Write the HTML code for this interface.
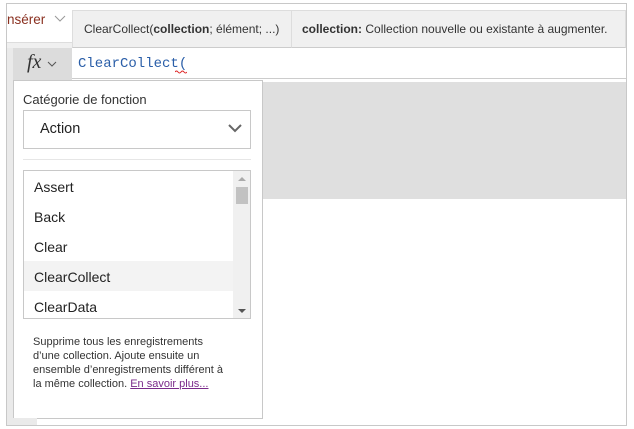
<!DOCTYPE html>
<html><head><meta charset="utf-8"><style>
*{margin:0;padding:0;box-sizing:border-box}
body{width:634px;height:429px;background:#fff;font-family:"Liberation Sans",sans-serif;position:relative;overflow:hidden;color:#333}
.a{position:absolute}
</style></head><body>
<div class="a" style="left:6px;top:3px;width:621px;height:423px;border:1px solid #c8c8c8;background:#fff"></div>
<div class="a" style="left:7px;top:42px;width:65px;height:6px;background:#f0f0f0;border-top:1px solid #ddd"></div>
<div class="a" style="left:7px;top:48px;width:7px;height:377px;background:#eaeaea"></div>
<div class="a" style="left:7px;top:12px;font-size:13.5px;color:#8a3020">nsérer</div>
<svg class="a" style="left:54px;top:15px" width="12" height="8"><path d="M1 1 L6 6 L11 1" fill="none" stroke="#999" stroke-width="1"/></svg>
<div class="a" style="left:72px;top:10px;width:220px;height:38px;background:#f0f0f0;border:1px solid #ddd;border-bottom:1px solid #ccc;font-size:12px;line-height:36px;padding-left:11px;color:#333;white-space:nowrap">ClearCollect(<b>collection</b>; élément; ...)</div>
<div class="a" style="left:291px;top:10px;width:335px;height:38px;background:#f0f0f0;border:1px solid #ddd;border-bottom:1px solid #ccc;font-size:12px;line-height:36px;padding-left:10px;color:#333;white-space:nowrap"><b>collection:</b> Collection nouvelle ou existante à augmenter.</div>
<div class="a" style="left:13px;top:48px;width:59px;height:32px;background:#dcdcdc"></div>
<div class="a" style="left:27px;top:51px;font-family:'Liberation Serif',serif;font-style:italic;font-size:20px;color:#333">fx</div>
<svg class="a" style="left:47px;top:61px" width="10" height="6"><path d="M1 1 L5 5 L9 1" fill="none" stroke="#555" stroke-width="1"/></svg>
<div class="a" style="left:72px;top:78px;width:554px;height:1px;background:#ccc"></div>
<div class="a" style="left:78px;top:56px;font-family:'Liberation Mono',monospace;font-size:14px;color:#2a5ea8">ClearCollect(</div>
<svg class="a" style="left:175px;top:70px" width="12" height="4"><path d="M0 2 Q1.5 0 3 2 T6 2 T9 2 T12 2" fill="none" stroke="#d22" stroke-width="1"/></svg>
<div class="a" style="left:262px;top:82px;width:364px;height:117px;background:#dfdfdf"></div>
<div class="a" style="left:13px;top:80px;width:250px;height:339px;background:#fff;border:1px solid #c8c8c8"></div>
<div class="a" style="left:13px;top:418px;width:24px;height:7px;background:#eaeaea"></div>
<div class="a" style="left:23px;top:92px;font-size:13px;color:#333">Catégorie de fonction</div>
<div class="a" style="left:23px;top:110px;width:228px;height:39px;border:1px solid #c8c8c8;font-size:14.5px;line-height:37px;padding-left:16px;color:#222">Action</div>
<svg class="a" style="left:228px;top:124px" width="14" height="9"><path d="M1 1 L7 7 L13 1" fill="none" stroke="#666" stroke-width="2"/></svg>
<div class="a" style="left:23px;top:159px;width:228px;height:1px;background:#e6e6e6"></div>
<div class="a" style="left:23px;top:170px;width:228px;height:149px;border:1px solid #c8c8c8;overflow:hidden">
 <div class="a" style="left:209px;top:0;width:17px;height:147px;background:#f0f0f0"></div>
 <div class="a" style="left:212px;top:16px;width:12px;height:17px;background:#c2c2c2"></div>
 <svg class="a" style="left:213px;top:6px" width="10" height="5"><path d="M1 4 L5 0 L9 4Z" fill="#aaa"/></svg>
 <svg class="a" style="left:213px;top:138px" width="10" height="5"><path d="M1 0 L5 4 L9 0Z" fill="#555"/></svg>
 <div class="a" style="left:0;top:90px;width:209px;height:30px;background:#f3f3f3"></div>
 <div class="a" style="left:10px;top:7px;font-size:14px;line-height:18px;color:#222">Assert</div>
 <div class="a" style="left:10px;top:37px;font-size:14px;line-height:18px;color:#222">Back</div>
 <div class="a" style="left:10px;top:67px;font-size:14px;line-height:18px;color:#222">Clear</div>
 <div class="a" style="left:10px;top:97px;font-size:14px;line-height:18px;color:#222">ClearCollect</div>
 <div class="a" style="left:10px;top:127px;font-size:14px;line-height:18px;color:#222">ClearData</div>
</div>
<div class="a" style="left:33px;top:335px;width:225px;font-size:11px;line-height:14px;color:#333;white-space:nowrap">Supprime tous les enregistrements<br>d’une collection. Ajoute ensuite un<br>ensemble d’enregistrements différent à<br>la même collection. <span style="color:#7a2a8a;text-decoration:underline">En savoir plus...</span></div>
</body></html>
